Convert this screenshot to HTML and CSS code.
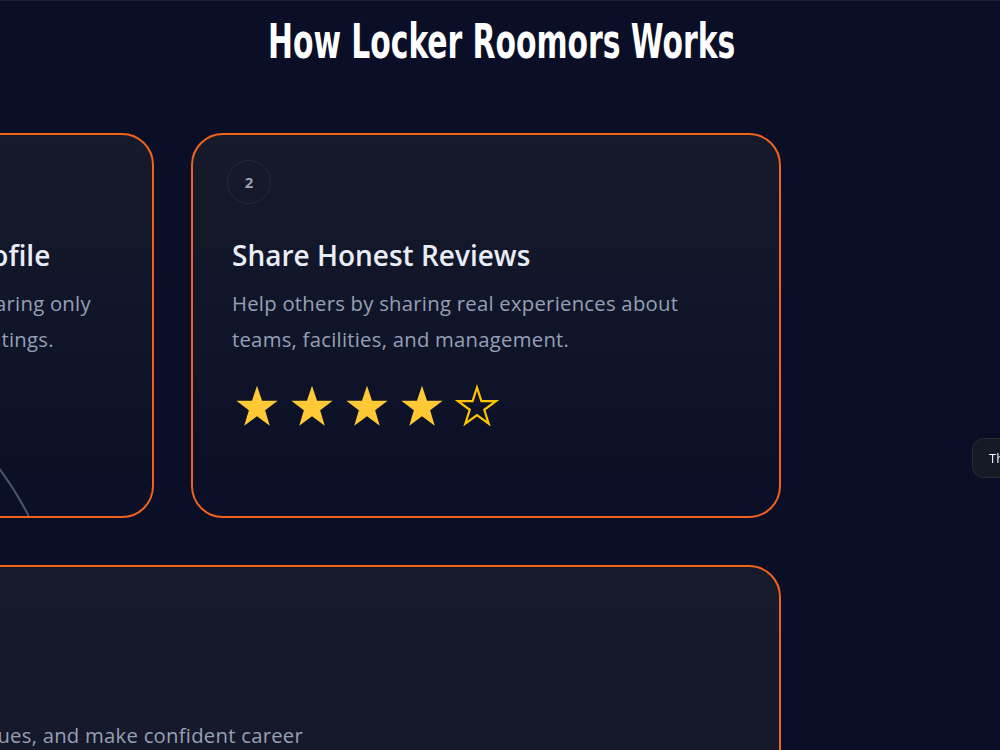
FILE: index.html
```html
<!DOCTYPE html>
<html lang="en">
<head>
<meta charset="utf-8">
<title>How Locker Roomors Works</title>
<link rel="stylesheet" href="styles.css">
</head>
<body>
<section class="how">
  <h2 class="how-title"><span class="how-title-text">How Locker Roomors Works</span></h2>

  <div class="steps">
    <article class="step">
      <span class="step-num">1</span>
      <h3 class="step-title">Register Your Anonymous Profile</h3>
      <p class="step-text">Sign up in seconds to set up a profile, sharing only what you want others to see with your ratings.</p>
      <span class="step-ring"></span>
    </article>

    <article class="step">
      <span class="step-num">2</span>
      <h3 class="step-title">Share Honest Reviews</h3>
      <p class="step-text">Help others by sharing real experiences about teams, facilities, and management.</p>
      <div class="stars" aria-label="4 out of 5 stars">
        <svg class="star" viewBox="0 0 100 100"><polygon class="star-full" points="50,4 61.5,38 97,38 68.5,59.5 79,95 50,73.5 21,95 31.5,59.5 3,38 38.5,38"/></svg>
        <svg class="star" viewBox="0 0 100 100"><polygon class="star-full" points="50,4 61.5,38 97,38 68.5,59.5 79,95 50,73.5 21,95 31.5,59.5 3,38 38.5,38"/></svg>
        <svg class="star" viewBox="0 0 100 100"><polygon class="star-full" points="50,4 61.5,38 97,38 68.5,59.5 79,95 50,73.5 21,95 31.5,59.5 3,38 38.5,38"/></svg>
        <svg class="star" viewBox="0 0 100 100"><polygon class="star-full" points="50,4 61.5,38 97,38 68.5,59.5 79,95 50,73.5 21,95 31.5,59.5 3,38 38.5,38"/></svg>
        <svg class="star" viewBox="0 0 100 100"><polygon class="star-empty" points="50,8 60,39 93,39 66.5,58.5 76.5,90 50,70.5 23.5,90 33.5,58.5 7,39 40,39"/></svg>
      </div>
    </article>

    <article class="step step-wide">
      <span class="step-num">3</span>
      <h3 class="step-title">Decide With Confidence</h3>
      <p class="step-text">Read reviews, compare cultures, spot issues, and make confident career moves backed by people who have been there.</p>
    </article>
  </div>
</section>

<div class="toast">Thanks for stopping by!</div>
</body>
</html>
```

FILE: styles.css
```css
* {
  box-sizing: border-box;
}

html,
body {
  margin: 0;
  height: 100%;
}

body {
  background: #0a0e27;
  color: #e9edf5;
  font-family: "Open Sans", Lato, sans-serif;
  overflow: hidden;
}

.how {
  border-top: 1px solid #1d2233;
  padding-top: 12px;
}

.how-title {
  margin: 0;
  text-align: center;
  font-family: "DejaVu Sans Condensed", "Liberation Sans", sans-serif;
  font-weight: 700;
  font-size: 48px;
  line-height: 56px;
  color: #ffffff;
}

/* condensed display face: narrow the bold condensed fallback */
.how-title-text {
  display: inline-block;
  transform: scaleX(0.69);
  transform-origin: 50% 50%;
  margin-left: 4px;
}

.steps {
  display: grid;
  grid-template-columns: 590px 590px;
  gap: 47px 37px;
  width: 1217px;
  margin: 64px 0 0 -436px;
}

.step {
  position: relative;
  overflow: hidden;
  height: 385px;
  padding: 25px 34px;
  border: 2px solid #f0631b;
  border-radius: 32px;
  background: linear-gradient(180deg, #161a2b 0%, #0b0f27 100%);
}

.step-wide {
  grid-column: span 2;
  height: 520px;
  background: linear-gradient(180deg, #161a2a 0%, #12162b 100%);
}

.step-num {
  display: flex;
  align-items: center;
  justify-content: center;
  width: 44px;
  height: 44px;
  border-radius: 50%;
  border: 1px solid rgba(255, 255, 255, 0.07);
  font-size: 15px;
  font-weight: 700;
  color: #98a2b6;
}

.step-title {
  margin: 33px 0 0 5px;
  font-size: 28px;
  line-height: 36px;
  font-weight: 600;
  color: #e9edf5;
}

.step-text {
  margin: 12px 0 0 5px;
  font-size: 20.3px;
  letter-spacing: 0.25px;
  line-height: 36px;
  color: #95a0b7;
  max-width: 505px;
}

.step-wide .step-text {
  max-width: 720px;
}

.stars {
  display: flex;
  gap: 11px;
  margin: 27px 0 0 8px;
}

.star {
  display: block;
  width: 44px;
  height: 44px;
}

.star-full {
  fill: #ffc935;
}

.star-empty {
  fill: none;
  stroke: #ffc400;
  stroke-width: 5;
  stroke-linejoin: miter;
}

/* decorative outline circle peeking from the card corner */
.step-ring {
  position: absolute;
  left: -142px;
  top: 205px;
  width: 640px;
  height: 640px;
  border-radius: 50%;
  border: 2px solid rgba(160, 168, 190, 0.45);
  pointer-events: none;
}

.toast {
  position: fixed;
  left: 972px;
  top: 438px;
  height: 40px;
  padding: 0 16px;
  display: flex;
  align-items: center;
  white-space: nowrap;
  border-radius: 12px;
  border: 1px solid rgba(255, 255, 255, 0.08);
  background: #161a27;
  color: #f1f3f7;
  font-size: 13px;
}
```
